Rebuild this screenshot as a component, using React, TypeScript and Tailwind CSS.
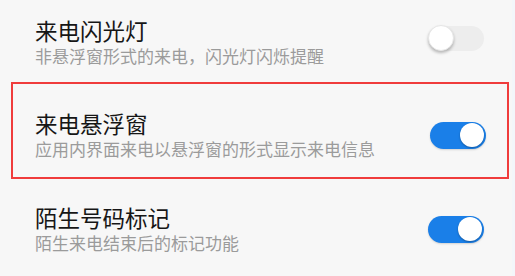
import React from "react";

const font = { fontFamily: '"Noto Sans CJK SC", "Noto Sans", sans-serif' };

const Toggle = ({ on }: { on: boolean }) => {
  if (on) {
    return (
      <div className="w-[56px] h-[27px] rounded-full bg-[#1a7fe8] flex items-center justify-end pr-[2px] shadow-[0_1px_2px_rgba(0,0,0,0.15)]">
        <div className="w-[24px] h-[24px] rounded-full bg-white shadow-[0_1px_2px_rgba(0,0,0,0.3)]"></div>
      </div>
    );
  }
  return (
    <div className="w-[56px] h-[25px] rounded-full bg-[#ededed] flex items-center">
      <div className="w-[26px] h-[26px] rounded-full bg-white shadow-[0_2px_3px_rgba(0,0,0,0.25)] border border-[#e6e6e6]"></div>
    </div>
  );
};

const Row = ({
  title,
  desc,
  on,
  lift = 0,
}: {
  title: string;
  desc: string;
  on: boolean;
  lift?: number;
}) => (
  <div className="flex items-center justify-between">
    <div className="flex flex-col">
      <div className="text-[22.5px] leading-[27px] text-[#161616]">
        {title}
      </div>
      <div className="mt-[1px] text-[17px] leading-[22px] text-[#9b9b9b]">
        {desc}
      </div>
    </div>
    <div className={lift ? "mb-[8px]" : ""}>
      <Toggle on={on} />
    </div>
  </div>
);

export default function App() {
  return (
    <div className="w-[515px] h-[276px] flex bg-[#f7f7f7] overflow-hidden" style={font}>
      <div className="w-[512px] flex flex-col">
        <div className="pt-[17px] pl-[35px] pr-[28px] h-[82px]">
          <Row title="来电闪光灯" desc="非悬浮窗形式的来电，闪光灯闪烁提醒" on={false} lift={1} />
        </div>
        <div className="mx-[11px] w-[498px] h-[97px] border-2 border-[#f03c3c] pt-[26px] pl-[22px] pr-[21px]">
          <Row title="来电悬浮窗" desc="应用内界面来电以悬浮窗的形式显示来电信息" on={true} />
        </div>
        <div className="pt-[25px] pl-[35px] pr-[28px]">
          <Row title="陌生号码标记" desc="陌生来电结束后的标记功能" on={true} />
        </div>
      </div>
      <div className="w-[3px] bg-[#f3f6fa]"></div>
    </div>
  );
}
